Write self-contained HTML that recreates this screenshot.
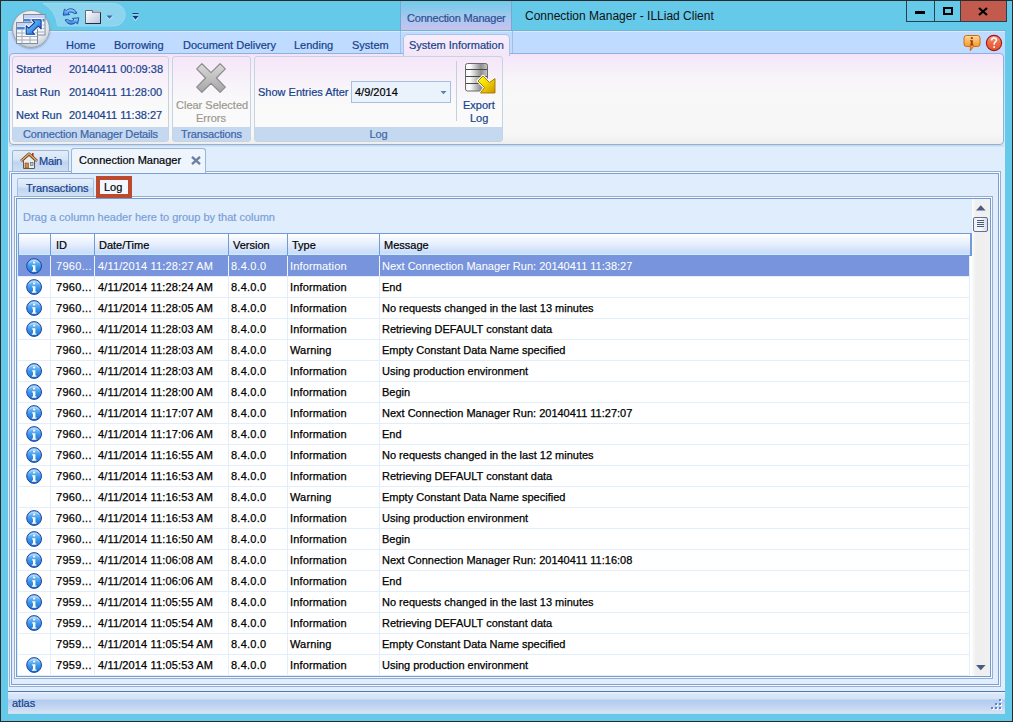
<!DOCTYPE html>
<html><head><meta charset="utf-8">
<style>
*{box-sizing:border-box;margin:0;padding:0}
.stk{-webkit-text-stroke:0.25px currentColor}
html,body{width:1013px;height:722px;overflow:hidden;background:#2b2b2b;font-family:"Liberation Sans",sans-serif;font-size:11px;color:#000;-webkit-text-stroke:0.2px currentColor}
.a{position:absolute}
#win{position:absolute;left:1px;top:1px;width:1011px;height:720px;background:#65c9ea;overflow:hidden}
.t{position:absolute;white-space:nowrap;line-height:13px}
/* title */
#title{left:525px;top:9px;font-size:12px;color:#111;line-height:15px;-webkit-text-stroke:0}
#ctxhdr{left:400px;top:1px;width:112px;height:30px;background:linear-gradient(#6fcbea,#a9c8ee 60%,#c8c3f0);border-left:1px solid #7aa6d6;border-right:1px solid #7aa6d6;border-bottom:1px solid #5a5a8a}
#ctxhdr span{position:absolute;left:6px;top:11px;color:#2c4f92;line-height:13px;letter-spacing:-0.2px}
#wctl{left:906px;top:1px;width:101px;height:21px;border:1px solid #2d3f4a;border-top:none;background:#65c9ea}
#wclose{left:960px;top:1px;width:47px;height:21px;background:#c35a4e;border:1px solid #2d3f4a;border-top:none}
/* ribbon tab row */
#tabrow{left:8px;top:31px;width:997px;height:23px;background:#bfdbff;border-top:1px solid #d9e9fd}
.rt{position:absolute;top:39px;color:#15428b;line-height:13px;white-space:nowrap}
#seltab{left:403px;top:34px;width:107px;height:22px;background:linear-gradient(#f7ecfb,#f3e6f7);border:1px solid #a9c4e4;border-bottom:none;border-radius:5px 5px 0 0}
#ctxl{left:400px;top:31px;width:1px;height:23px;background:#9fbfe6}
#ctxr{left:512px;top:31px;width:1px;height:23px;background:#9fbfe6}
/* ribbon body */
#rbody{left:9px;top:53px;width:995px;height:92px;border:1px solid #8eb2de;border-radius:4px;background:linear-gradient(#f5e3fa 0px,#f6ecfa 10px,#f8f5f9 26px,#f8f8f8 40px,#f7f7f7 80px,#eeeeee 90px)}
.grp{position:absolute;top:56px;height:86px;border:1px solid #c5d3e3;border-radius:3px;background:linear-gradient(#f5e6f8,#f8f4fa 30px,#fafafa 50px)}
.glab{position:absolute;left:0;right:0;bottom:0;height:14px;background:#c4d8f0;color:#3e64a6;text-align:center;line-height:15px;letter-spacing:-0.15px}
.rl{color:#15428b}
#below{left:8px;top:145px;width:997px;height:546px;background:#e0edfd}
/* doc tabs */
#tmain{left:12px;top:150px;width:57px;height:22px;border:1px solid #9cb6d8;border-bottom:none;border-radius:2px 2px 0 0;background:linear-gradient(#e4edf9,#d6e4f6 40%,#bed4f1 55%,#d0e0f5)}
#tcm{left:71px;top:148px;width:135px;height:25px;z-index:1;border:1px solid #9cb6d8;border-bottom:none;border-radius:3px 3px 0 0;background:#eef5fd}
#panel{left:9px;top:171px;width:992px;height:516px;border:1px solid #9aaec8;background:#f6faff}
#panel2{left:11px;top:173px;width:988px;height:512px;border:1px solid #7a9fd8;background:#e0edfd}
/* sub tabs */
#stx{left:17px;top:178px;width:77px;height:19px;border:1px solid #a4bfe4;border-bottom:none;border-radius:2px 2px 0 0;background:linear-gradient(#e6eefa,#d8e6f7 40%,#c0d6f2 55%,#d2e2f6)}
#slog{left:96px;top:176px;width:36px;height:22px;border:4px solid #bc4a2e;background:#f4f8fe;z-index:5}
/* grid */
#gridout{left:14px;top:196px;width:979px;height:483px;border:1px solid #9aaec8;background:#f6faff}
#gridin{left:16px;top:198px;width:975px;height:479px;border:1px solid #6f9bd6;background:#e0edfd}
#drag{left:23px;top:211px;color:#7a9fd6}
#hdr{left:18px;top:233px;width:954px;height:23px;border:1px solid #6f9bd6;background:linear-gradient(#ffffff,#e8f0fd 45%,#c8dcfa 90%,#d8e8fd)}
.hc{position:absolute;top:0;height:21px;border-right:1px solid #6f9bd6}
.ht{position:absolute;top:5px;color:#000;white-space:nowrap;line-height:13px}
#rows{left:18px;top:0px;width:953px;height:677px;}
.row{position:absolute;left:18px;width:951px;height:21px;background:#fff;border-bottom:1px solid #e3eefb}
.row.sel{background:#7894dc;color:#fff;-webkit-text-stroke:0.05px #fff}
.c{position:absolute;top:0;height:20px;line-height:20px;white-space:nowrap;padding-left:4px;border-right:1px solid #e3eefb;overflow:hidden}
.sel .c{border-right-color:#eef3fc}
.c0{left:0;width:33px;padding-left:0}
.c1{left:33px;width:44px;padding-left:5px;letter-spacing:0.3px}
.c2{left:77px;width:134px;padding-left:3px;letter-spacing:0.14px}
.c3{left:211px;width:59px;padding-left:2px;letter-spacing:0.25px}
.c4{left:270px;width:92px;padding-left:2px;letter-spacing:0.15px}
.c5{left:362px;width:589px;border-right:none;padding-left:2px}
.ic{position:absolute;left:8px;top:2px}
#vscroll{left:972px;top:199px;width:18px;height:477px;background:linear-gradient(90deg,#fbfbfb,#efefef 4px,#f0f0f0)}
#status{left:8px;top:691px;width:997px;height:23px;border-top:1px solid #4a76b8;background:linear-gradient(#f2f7fd 0px,#dae7f8 2px,#d3e2f7 7px,#b2cbf0 8px,#c3d6f2 15px,#d6e3f5 21px,#c9d8ea 22px)}
</style></head><body>
<div id="win"></div>
<!-- QAT -->
<svg class="a" style="left:0;top:0" width="140" height="32"><path d="M43 3.5H114A11.25 11.25 0 0 1 114 26H57.5A26.5 26.5 0 0 0 43 3.5Z" fill="#8dd4ee" stroke="#9ad9f0" stroke-width="1"/></svg>
<svg class="a" style="left:62px;top:7px" width="18" height="18" viewBox="0 0 18 18">
 <defs><linearGradient id="rg" x1="0" y1="0" x2="0" y2="1"><stop offset="0" stop-color="#a8d8ff"/><stop offset="1" stop-color="#2f7fe0"/></linearGradient></defs>
 <path d="M14.8 6.2C13.5 3 11 1.6 8.3 1.8C6.6 1.9 5.3 2.6 4.4 3.6L2.4 2.2L1.2 8.2L7.6 7.6L6.1 6.1C6.8 5.3 7.8 4.9 9 5C10.5 5.1 11.6 5.7 12.4 6.6Z" fill="url(#rg)" stroke="#1548a8" stroke-width="0.9" stroke-linejoin="round"/>
 <path d="M3.2 12.8C4.5 16 7 17.4 9.7 17.2C11.4 17.1 12.7 16.4 13.6 15.4L15.6 16.8L16.8 10.8L10.4 11.4L11.9 12.9C11.2 13.7 10.2 14.1 9 14C7.5 13.9 6.4 13.3 5.6 12.4Z" fill="url(#rg)" stroke="#1548a8" stroke-width="0.9" stroke-linejoin="round"/>
</svg>
<svg class="a" style="left:84px;top:9px" width="18" height="16" viewBox="0 0 18 16">
 <defs><linearGradient id="fg" x1="0" y1="0" x2="1" y2="1"><stop offset="0" stop-color="#ffffff"/><stop offset="1" stop-color="#b9c4d8"/></linearGradient></defs>
 <path d="M1.5 1.5H8.5V3.5H16.5V14.5H1.5Z" fill="url(#fg)" stroke="#5a6a86"/>
 <rect x="9" y="1.5" width="7" height="2" fill="#b4b8bc"/>
 <path d="M16.5 3.5V14.5H1.5" stroke="#1e2c48" fill="none"/>
</svg>
<svg class="a" style="left:106px;top:15px" width="7" height="6"><path d="M0.5 0.5h6l-3 3.2z" fill="#3f68a8"/><path d="M0.5 1.5l3 3.2 3-3.2" stroke="#e8f6fc" stroke-width=".8" fill="none" opacity=".7"/></svg>
<svg class="a" style="left:132px;top:12px" width="7" height="10"><path d="M0.5 1h6v1.2h-6zM0.5 4h6l-3 3.6z" fill="#1a3678"/><path d="M0.5 2.6h6M0.5 5l3 3.6 3-3.6" stroke="#f0f8ff" stroke-width=".7" fill="none" opacity=".8"/></svg>

<div id="ctxhdr" class="a"><span>Connection Manager</span></div>
<div id="title" class="t">Connection Manager - ILLiad Client</div>
<div id="wctl" class="a"></div>
<div class="a" style="left:934px;top:1px;width:1px;height:21px;background:#2d3f4a"></div>
<div id="wclose" class="a"></div>
<div class="a" style="left:915px;top:11px;width:10px;height:3px;background:#000"></div>
<div class="a" style="left:943px;top:7px;width:10px;height:8px;border:2px solid #000"></div>
<svg class="a" style="left:978px;top:7px" width="10" height="9"><path d="M1 1l8 7M9 1l-8 7" stroke="#000" stroke-width="2.2"/></svg>

<div id="tabrow" class="a"></div>
<div class="a" style="left:8px;top:30px;width:997px;height:1px;background:#72b4cc"></div>
<div id="ctxl" class="a"></div><div id="ctxr" class="a"></div>
<div class="a" style="left:12px;top:10px;width:38px;height:38px;border-radius:50%;background:radial-gradient(circle at 50% 35%,#ffffff,#e4e8ee 55%,#aeb8c4);border:1px solid #9aa4b0;box-shadow:0 1px 2px rgba(0,0,0,.25)"></div>
<svg class="a" style="left:8px;top:6px" width="46" height="46" viewBox="0 0 46 46">
 <defs><linearGradient id="ab" x1="0" y1="0" x2="1" y2="1"><stop offset="0" stop-color="#9fd4fb"/><stop offset=".5" stop-color="#4a9be8"/><stop offset="1" stop-color="#1662c4"/></linearGradient></defs>
 <rect x="15.5" y="8.5" width="21.5" height="20.5" fill="#f4f6fa" stroke="#7f8c9a"/>
 <rect x="16" y="9" width="20.5" height="3.5" fill="#c9d0f2"/>
 <rect x="16" y="13" width="20.5" height="2.5" fill="#3f86d6"/>
 <path d="M16 19h20.5M16 22.5h20.5M16 26h20.5M22 15.5v13M29 15.5v13" stroke="#a4acb6" stroke-width="1"/>
 <rect x="8.5" y="16.5" width="21" height="21" fill="#f4f6fa" stroke="#7f8c9a"/>
 <rect x="9" y="17" width="20" height="3.5" fill="#c9d0f2"/>
 <rect x="9" y="21" width="20" height="2.5" fill="#3f86d6"/>
 <path d="M9 27h20M9 30.5h20M9 34h20M14 23.5v14M22 23.5v14" stroke="#a4acb6" stroke-width="1"/>
 <path d="M33.1 13.7L33.1 22.9L30.3 20.1L24.3 25.8L26.8 28.3L18.2 28.3L18.2 19.7L20.7 22.2L26.7 16.5L23.9 13.7Z" fill="none" stroke="#fff" stroke-width="3" stroke-linejoin="round"/>
 <path d="M33.1 13.7L33.1 22.9L30.3 20.1L24.3 25.8L26.8 28.3L18.2 28.3L18.2 19.7L20.7 22.2L26.7 16.5L23.9 13.7Z" fill="url(#ab)" stroke="#0d3f9e" stroke-width="1.1" stroke-linejoin="round"/>
</svg>

<div class="rt" style="left:66px">Home</div>
<div class="rt" style="left:114px">Borrowing</div>
<div class="rt" style="left:183px">Document Delivery</div>
<div class="rt" style="left:294px">Lending</div>
<div class="rt" style="left:352px">System</div>
<!-- help icons -->
<svg class="a" style="left:963px;top:34px" width="18" height="19" viewBox="0 0 18 19">
 <defs><linearGradient id="ig" x1="0" y1="0" x2="0" y2="1"><stop offset="0" stop-color="#ffd89a"/><stop offset=".6" stop-color="#f6a43c"/><stop offset="1" stop-color="#ee8a1c"/></linearGradient></defs>
 <path d="M3.5 1.5h11a2.5 2.5 0 0 1 2.5 2.5v6a2.5 2.5 0 0 1-2.5 2.5h-4l-3.2 4.2v-4.2H3.5A2.5 2.5 0 0 1 1 10V4a2.5 2.5 0 0 1 2.5-2.5z" fill="url(#ig)" stroke="#d06a10"/>
 <rect x="7.8" y="3.2" width="2" height="1.8" fill="#a03a10"/><path d="M7 6.2h2.8v4.3h0.8v1.1H7v-1.1h0.8V7.3H7z" fill="#a03a10"/>
</svg>
<svg class="a" style="left:985px;top:34px" width="18" height="18" viewBox="0 0 18 18">
 <defs><linearGradient id="hg" x1="0" y1="0" x2="0" y2="1"><stop offset="0" stop-color="#f7a68a"/><stop offset=".5" stop-color="#ee6a48"/><stop offset="1" stop-color="#e2562e"/></linearGradient></defs>
 <circle cx="9" cy="9" r="7.6" fill="url(#hg)" stroke="#a4140c" stroke-width="1.1"/>
 <path d="M6.6 6.4C6.6 4.9 7.6 4.1 9 4.1C10.5 4.1 11.4 5 11.4 6.2C11.4 7.6 9.4 8 9.2 9.6V10.8" stroke="#fff" stroke-width="1.5" fill="none"/>
 <rect x="8.3" y="12.2" width="1.7" height="1.7" fill="#fff"/>
</svg>

<div class="a" style="left:8px;top:53px;width:997px;height:92px;background:linear-gradient(#bfdbff,#d8e7fb)"></div>
<div id="rbody" class="a"></div>
<div id="seltab" class="a"></div>
<div class="rt" style="left:409px">System Information</div>
<div class="grp" style="left:12px;width:157px"><div class="glab">Connection Manager Details</div></div>
<div class="grp" style="left:172px;width:79px"><div class="glab">Transactions</div></div>
<div class="grp" style="left:254px;width:249px"><div class="glab">Log</div></div>
<div class="t rl" style="left:16px;top:63px">Started</div>
<div class="t rl" style="left:69px;top:63px">20140411 00:09:38</div>
<div class="t rl" style="left:16px;top:86px">Last Run</div>
<div class="t rl" style="left:69px;top:86px">20140411 11:28:00</div>
<div class="t rl" style="left:16px;top:109px">Next Run</div>
<div class="t rl" style="left:69px;top:109px">20140411 11:38:27</div>
<svg class="a" style="left:194px;top:61px" width="34" height="34" viewBox="0 0 34 34">
 <defs><linearGradient id="xg" x1="0" y1="0" x2="0" y2="1"><stop offset="0" stop-color="#dadada"/><stop offset="1" stop-color="#a6a6a6"/></linearGradient></defs>
 <path d="M2.7 7.9L7.9 2.7L17 11.6L26.1 2.7L31.3 7.9L22.4 17L31.3 26.1L26.1 31.3L17 22.4L7.9 31.3L2.7 26.1L11.6 17Z" fill="url(#xg)" stroke="#8c8c8c" stroke-width="1.2" stroke-linejoin="round"/>
</svg>
<div class="t" style="left:176px;top:99px;color:#9c9890">Clear Selected</div>
<div class="t" style="left:196px;top:112px;color:#9c9890">Errors</div>
<div class="t rl" style="left:258px;top:86px">Show Entries After</div>
<div class="a" style="left:351px;top:81px;width:100px;height:22px;border:1px solid #a7bfdf;background:#eaf2fb"></div>
<div class="t" style="left:355px;top:86px;color:#000">4/9/2014</div>
<svg class="a" style="left:440px;top:91px" width="7" height="4"><path d="M0.5 0h6l-3 3.2z" fill="#5a7db5"/></svg>
<div class="a" style="left:456px;top:61px;width:1px;height:60px;background:#c3d0e0"></div>
<svg class="a" style="left:458px;top:56px" width="44" height="44" viewBox="0 0 44 44">
 <defs><linearGradient id="dg" x1="0" y1="0" x2="1" y2="0"><stop offset="0" stop-color="#f4f4f4"/><stop offset=".2" stop-color="#ffffff"/><stop offset=".7" stop-color="#8e8e8e"/><stop offset="1" stop-color="#c8c8c8"/></linearGradient>
 <linearGradient id="ag" x1="0" y1="0" x2="1" y2="1"><stop offset="0" stop-color="#ffff20"/><stop offset=".45" stop-color="#f2d800"/><stop offset="1" stop-color="#c89200"/></linearGradient></defs>
 <rect x="7.5" y="7.5" width="22" height="27.5" rx="2" fill="url(#dg)" stroke="#6a6a6a"/>
 <path d="M8 13.5h21M8 20.5h21M8 27.5h21" stroke="#4a4a4a" stroke-width="1.2"/>
 <path d="M37 37L37 22.5L31.5 26.5L25 20L20 25L26.5 31.5L22.5 37Z" fill="none" stroke="#fff" stroke-width="2.5" stroke-linejoin="round"/>
 <path d="M37 37L37 22.5L31.5 26.5L25 20L20 25L26.5 31.5L22.5 37Z" fill="url(#ag)" stroke="#a87a00" stroke-width="1" stroke-linejoin="round"/>
</svg>
<div class="t rl" style="left:463px;top:99px">Export</div>
<div class="t rl" style="left:470px;top:112px">Log</div>

<div id="below" class="a"></div>
<div class="a" style="left:9px;top:145px;width:995px;height:2px;background:linear-gradient(#c9d3df,#d9e8fb)"></div>
<div id="tmain" class="a"></div>
<svg class="a" style="left:20px;top:152px" width="18" height="18" viewBox="0 0 18 18">
 <rect x="12" y="1" width="1.6" height="4" fill="#c8281c"/>
 <path d="M3.5 8.5V16.5H14.5V8.5L9 3.5Z" fill="#ececec" stroke="#5a5a5a"/>
 <path d="M1 9L9 1.8L17 9" stroke="#6a4420" stroke-width="2.6" fill="none" stroke-linejoin="round"/>
 <path d="M1 9L9 1.8L17 9" stroke="#e2a964" stroke-width="1.4" fill="none" stroke-linejoin="round"/>
 <rect x="5" y="11" width="3.4" height="5" fill="#d88a3a" stroke="#7a4a1a" stroke-width=".6"/>
 <rect x="10.4" y="10.5" width="2.6" height="2.8" fill="#9fd0f8" stroke="#5a5a5a" stroke-width=".6"/>
</svg>
<div class="t" style="left:39px;top:155px;color:#15428b;letter-spacing:-0.2px">Main</div>

<div id="panel" class="a"></div>
<div id="panel2" class="a"></div>
<div id="tcm" class="a"></div>
<div class="t" style="left:79px;top:154px;z-index:2">Connection Manager</div>
<svg class="a" style="left:191px;top:156px;z-index:2" width="10" height="9"><path d="M1 0.8l8 7.4M9 0.8l-8 7.4" stroke="#6f7fa2" stroke-width="2.3"/></svg>
<div id="stx" class="a"></div>
<div class="t" style="left:26px;top:182px;color:#15428b">Transactions</div>
<div id="slog" class="a"></div>
<div class="t" style="left:104px;top:181px;z-index:6">Log</div>

<div id="gridout" class="a"></div>
<div id="gridin" class="a"></div>
<div id="drag" class="t">Drag a column header here to group by that column</div>
<div id="hdr" class="a">
 <div class="hc" style="left:0;width:32px"></div>
 <div class="hc" style="left:32px;width:44px"></div>
 <div class="hc" style="left:76px;width:134px"></div>
 <div class="hc" style="left:210px;width:59px"></div>
 <div class="hc" style="left:269px;width:92px"></div>
 <div class="hc" style="left:361px;width:591px"></div>
 <div class="ht" style="left:37px">ID</div>
 <div class="ht" style="left:80px">Date/Time</div>
 <div class="ht" style="left:214px">Version</div>
 <div class="ht" style="left:273px">Type</div>
 <div class="ht" style="left:365px">Message</div>
</div>
<div class="a" style="left:18px;top:256px;width:954px;height:420px;background:#fff"></div>
<svg width="0" height="0" style="position:absolute"><defs><linearGradient id="gI" x1="0" y1="0" x2="0" y2="1"><stop offset="0" stop-color="#9ad2f8"/><stop offset=".55" stop-color="#3a96ea"/><stop offset="1" stop-color="#1670d4"/></linearGradient></defs></svg><div class="row sel stk" style="top:256px"><div class="c c0"><svg class="ic" width="17" height="17" viewBox="0 0 17 17"><circle cx="8.1" cy="8" r="7.4" fill="url(#gI)" stroke="#23449e" stroke-width="1"/><path d="M3.4 4.6A6.2 6.2 0 0 1 12.8 4.6" stroke="#e8f4ff" stroke-opacity=".55" stroke-width="1" fill="none"/><rect x="7.1" y="3.6" width="2.1" height="1.8" fill="#fff"/><path d="M6.1 7.3h3.3v5.2h1v1.3H5.9v-1.3h1.1V8.6H6.1z" fill="#fff"/></svg></div><div class="c c1">7960...</div><div class="c c2">4/11/2014 11:28:27 AM</div><div class="c c3">8.4.0.0</div><div class="c c4">Information</div><div class="c c5">Next Connection Manager Run: 20140411 11:38:27</div></div>
<div class="row stk" style="top:277px"><div class="c c0"><svg class="ic" width="17" height="17" viewBox="0 0 17 17"><circle cx="8.1" cy="8" r="7.4" fill="url(#gI)" stroke="#23449e" stroke-width="1"/><path d="M3.4 4.6A6.2 6.2 0 0 1 12.8 4.6" stroke="#e8f4ff" stroke-opacity=".55" stroke-width="1" fill="none"/><rect x="7.1" y="3.6" width="2.1" height="1.8" fill="#fff"/><path d="M6.1 7.3h3.3v5.2h1v1.3H5.9v-1.3h1.1V8.6H6.1z" fill="#fff"/></svg></div><div class="c c1">7960...</div><div class="c c2">4/11/2014 11:28:24 AM</div><div class="c c3">8.4.0.0</div><div class="c c4">Information</div><div class="c c5">End</div></div>
<div class="row stk" style="top:298px"><div class="c c0"><svg class="ic" width="17" height="17" viewBox="0 0 17 17"><circle cx="8.1" cy="8" r="7.4" fill="url(#gI)" stroke="#23449e" stroke-width="1"/><path d="M3.4 4.6A6.2 6.2 0 0 1 12.8 4.6" stroke="#e8f4ff" stroke-opacity=".55" stroke-width="1" fill="none"/><rect x="7.1" y="3.6" width="2.1" height="1.8" fill="#fff"/><path d="M6.1 7.3h3.3v5.2h1v1.3H5.9v-1.3h1.1V8.6H6.1z" fill="#fff"/></svg></div><div class="c c1">7960...</div><div class="c c2">4/11/2014 11:28:05 AM</div><div class="c c3">8.4.0.0</div><div class="c c4">Information</div><div class="c c5">No requests changed in the last 13 minutes</div></div>
<div class="row stk" style="top:319px"><div class="c c0"><svg class="ic" width="17" height="17" viewBox="0 0 17 17"><circle cx="8.1" cy="8" r="7.4" fill="url(#gI)" stroke="#23449e" stroke-width="1"/><path d="M3.4 4.6A6.2 6.2 0 0 1 12.8 4.6" stroke="#e8f4ff" stroke-opacity=".55" stroke-width="1" fill="none"/><rect x="7.1" y="3.6" width="2.1" height="1.8" fill="#fff"/><path d="M6.1 7.3h3.3v5.2h1v1.3H5.9v-1.3h1.1V8.6H6.1z" fill="#fff"/></svg></div><div class="c c1">7960...</div><div class="c c2">4/11/2014 11:28:03 AM</div><div class="c c3">8.4.0.0</div><div class="c c4">Information</div><div class="c c5">Retrieving DEFAULT constant data</div></div>
<div class="row stk" style="top:340px"><div class="c c0"></div><div class="c c1">7960...</div><div class="c c2">4/11/2014 11:28:03 AM</div><div class="c c3">8.4.0.0</div><div class="c c4">Warning</div><div class="c c5">Empty Constant Data Name specified</div></div>
<div class="row stk" style="top:361px"><div class="c c0"><svg class="ic" width="17" height="17" viewBox="0 0 17 17"><circle cx="8.1" cy="8" r="7.4" fill="url(#gI)" stroke="#23449e" stroke-width="1"/><path d="M3.4 4.6A6.2 6.2 0 0 1 12.8 4.6" stroke="#e8f4ff" stroke-opacity=".55" stroke-width="1" fill="none"/><rect x="7.1" y="3.6" width="2.1" height="1.8" fill="#fff"/><path d="M6.1 7.3h3.3v5.2h1v1.3H5.9v-1.3h1.1V8.6H6.1z" fill="#fff"/></svg></div><div class="c c1">7960...</div><div class="c c2">4/11/2014 11:28:03 AM</div><div class="c c3">8.4.0.0</div><div class="c c4">Information</div><div class="c c5">Using production environment</div></div>
<div class="row stk" style="top:382px"><div class="c c0"><svg class="ic" width="17" height="17" viewBox="0 0 17 17"><circle cx="8.1" cy="8" r="7.4" fill="url(#gI)" stroke="#23449e" stroke-width="1"/><path d="M3.4 4.6A6.2 6.2 0 0 1 12.8 4.6" stroke="#e8f4ff" stroke-opacity=".55" stroke-width="1" fill="none"/><rect x="7.1" y="3.6" width="2.1" height="1.8" fill="#fff"/><path d="M6.1 7.3h3.3v5.2h1v1.3H5.9v-1.3h1.1V8.6H6.1z" fill="#fff"/></svg></div><div class="c c1">7960...</div><div class="c c2">4/11/2014 11:28:00 AM</div><div class="c c3">8.4.0.0</div><div class="c c4">Information</div><div class="c c5">Begin</div></div>
<div class="row stk" style="top:403px"><div class="c c0"><svg class="ic" width="17" height="17" viewBox="0 0 17 17"><circle cx="8.1" cy="8" r="7.4" fill="url(#gI)" stroke="#23449e" stroke-width="1"/><path d="M3.4 4.6A6.2 6.2 0 0 1 12.8 4.6" stroke="#e8f4ff" stroke-opacity=".55" stroke-width="1" fill="none"/><rect x="7.1" y="3.6" width="2.1" height="1.8" fill="#fff"/><path d="M6.1 7.3h3.3v5.2h1v1.3H5.9v-1.3h1.1V8.6H6.1z" fill="#fff"/></svg></div><div class="c c1">7960...</div><div class="c c2">4/11/2014 11:17:07 AM</div><div class="c c3">8.4.0.0</div><div class="c c4">Information</div><div class="c c5">Next Connection Manager Run: 20140411 11:27:07</div></div>
<div class="row stk" style="top:424px"><div class="c c0"><svg class="ic" width="17" height="17" viewBox="0 0 17 17"><circle cx="8.1" cy="8" r="7.4" fill="url(#gI)" stroke="#23449e" stroke-width="1"/><path d="M3.4 4.6A6.2 6.2 0 0 1 12.8 4.6" stroke="#e8f4ff" stroke-opacity=".55" stroke-width="1" fill="none"/><rect x="7.1" y="3.6" width="2.1" height="1.8" fill="#fff"/><path d="M6.1 7.3h3.3v5.2h1v1.3H5.9v-1.3h1.1V8.6H6.1z" fill="#fff"/></svg></div><div class="c c1">7960...</div><div class="c c2">4/11/2014 11:17:06 AM</div><div class="c c3">8.4.0.0</div><div class="c c4">Information</div><div class="c c5">End</div></div>
<div class="row stk" style="top:445px"><div class="c c0"><svg class="ic" width="17" height="17" viewBox="0 0 17 17"><circle cx="8.1" cy="8" r="7.4" fill="url(#gI)" stroke="#23449e" stroke-width="1"/><path d="M3.4 4.6A6.2 6.2 0 0 1 12.8 4.6" stroke="#e8f4ff" stroke-opacity=".55" stroke-width="1" fill="none"/><rect x="7.1" y="3.6" width="2.1" height="1.8" fill="#fff"/><path d="M6.1 7.3h3.3v5.2h1v1.3H5.9v-1.3h1.1V8.6H6.1z" fill="#fff"/></svg></div><div class="c c1">7960...</div><div class="c c2">4/11/2014 11:16:55 AM</div><div class="c c3">8.4.0.0</div><div class="c c4">Information</div><div class="c c5">No requests changed in the last 12 minutes</div></div>
<div class="row stk" style="top:466px"><div class="c c0"><svg class="ic" width="17" height="17" viewBox="0 0 17 17"><circle cx="8.1" cy="8" r="7.4" fill="url(#gI)" stroke="#23449e" stroke-width="1"/><path d="M3.4 4.6A6.2 6.2 0 0 1 12.8 4.6" stroke="#e8f4ff" stroke-opacity=".55" stroke-width="1" fill="none"/><rect x="7.1" y="3.6" width="2.1" height="1.8" fill="#fff"/><path d="M6.1 7.3h3.3v5.2h1v1.3H5.9v-1.3h1.1V8.6H6.1z" fill="#fff"/></svg></div><div class="c c1">7960...</div><div class="c c2">4/11/2014 11:16:53 AM</div><div class="c c3">8.4.0.0</div><div class="c c4">Information</div><div class="c c5">Retrieving DEFAULT constant data</div></div>
<div class="row stk" style="top:487px"><div class="c c0"></div><div class="c c1">7960...</div><div class="c c2">4/11/2014 11:16:53 AM</div><div class="c c3">8.4.0.0</div><div class="c c4">Warning</div><div class="c c5">Empty Constant Data Name specified</div></div>
<div class="row stk" style="top:508px"><div class="c c0"><svg class="ic" width="17" height="17" viewBox="0 0 17 17"><circle cx="8.1" cy="8" r="7.4" fill="url(#gI)" stroke="#23449e" stroke-width="1"/><path d="M3.4 4.6A6.2 6.2 0 0 1 12.8 4.6" stroke="#e8f4ff" stroke-opacity=".55" stroke-width="1" fill="none"/><rect x="7.1" y="3.6" width="2.1" height="1.8" fill="#fff"/><path d="M6.1 7.3h3.3v5.2h1v1.3H5.9v-1.3h1.1V8.6H6.1z" fill="#fff"/></svg></div><div class="c c1">7960...</div><div class="c c2">4/11/2014 11:16:53 AM</div><div class="c c3">8.4.0.0</div><div class="c c4">Information</div><div class="c c5">Using production environment</div></div>
<div class="row stk" style="top:529px"><div class="c c0"><svg class="ic" width="17" height="17" viewBox="0 0 17 17"><circle cx="8.1" cy="8" r="7.4" fill="url(#gI)" stroke="#23449e" stroke-width="1"/><path d="M3.4 4.6A6.2 6.2 0 0 1 12.8 4.6" stroke="#e8f4ff" stroke-opacity=".55" stroke-width="1" fill="none"/><rect x="7.1" y="3.6" width="2.1" height="1.8" fill="#fff"/><path d="M6.1 7.3h3.3v5.2h1v1.3H5.9v-1.3h1.1V8.6H6.1z" fill="#fff"/></svg></div><div class="c c1">7960...</div><div class="c c2">4/11/2014 11:16:50 AM</div><div class="c c3">8.4.0.0</div><div class="c c4">Information</div><div class="c c5">Begin</div></div>
<div class="row stk" style="top:550px"><div class="c c0"><svg class="ic" width="17" height="17" viewBox="0 0 17 17"><circle cx="8.1" cy="8" r="7.4" fill="url(#gI)" stroke="#23449e" stroke-width="1"/><path d="M3.4 4.6A6.2 6.2 0 0 1 12.8 4.6" stroke="#e8f4ff" stroke-opacity=".55" stroke-width="1" fill="none"/><rect x="7.1" y="3.6" width="2.1" height="1.8" fill="#fff"/><path d="M6.1 7.3h3.3v5.2h1v1.3H5.9v-1.3h1.1V8.6H6.1z" fill="#fff"/></svg></div><div class="c c1">7959...</div><div class="c c2">4/11/2014 11:06:08 AM</div><div class="c c3">8.4.0.0</div><div class="c c4">Information</div><div class="c c5">Next Connection Manager Run: 20140411 11:16:08</div></div>
<div class="row stk" style="top:571px"><div class="c c0"><svg class="ic" width="17" height="17" viewBox="0 0 17 17"><circle cx="8.1" cy="8" r="7.4" fill="url(#gI)" stroke="#23449e" stroke-width="1"/><path d="M3.4 4.6A6.2 6.2 0 0 1 12.8 4.6" stroke="#e8f4ff" stroke-opacity=".55" stroke-width="1" fill="none"/><rect x="7.1" y="3.6" width="2.1" height="1.8" fill="#fff"/><path d="M6.1 7.3h3.3v5.2h1v1.3H5.9v-1.3h1.1V8.6H6.1z" fill="#fff"/></svg></div><div class="c c1">7959...</div><div class="c c2">4/11/2014 11:06:06 AM</div><div class="c c3">8.4.0.0</div><div class="c c4">Information</div><div class="c c5">End</div></div>
<div class="row stk" style="top:592px"><div class="c c0"><svg class="ic" width="17" height="17" viewBox="0 0 17 17"><circle cx="8.1" cy="8" r="7.4" fill="url(#gI)" stroke="#23449e" stroke-width="1"/><path d="M3.4 4.6A6.2 6.2 0 0 1 12.8 4.6" stroke="#e8f4ff" stroke-opacity=".55" stroke-width="1" fill="none"/><rect x="7.1" y="3.6" width="2.1" height="1.8" fill="#fff"/><path d="M6.1 7.3h3.3v5.2h1v1.3H5.9v-1.3h1.1V8.6H6.1z" fill="#fff"/></svg></div><div class="c c1">7959...</div><div class="c c2">4/11/2014 11:05:55 AM</div><div class="c c3">8.4.0.0</div><div class="c c4">Information</div><div class="c c5">No requests changed in the last 13 minutes</div></div>
<div class="row stk" style="top:613px"><div class="c c0"><svg class="ic" width="17" height="17" viewBox="0 0 17 17"><circle cx="8.1" cy="8" r="7.4" fill="url(#gI)" stroke="#23449e" stroke-width="1"/><path d="M3.4 4.6A6.2 6.2 0 0 1 12.8 4.6" stroke="#e8f4ff" stroke-opacity=".55" stroke-width="1" fill="none"/><rect x="7.1" y="3.6" width="2.1" height="1.8" fill="#fff"/><path d="M6.1 7.3h3.3v5.2h1v1.3H5.9v-1.3h1.1V8.6H6.1z" fill="#fff"/></svg></div><div class="c c1">7959...</div><div class="c c2">4/11/2014 11:05:54 AM</div><div class="c c3">8.4.0.0</div><div class="c c4">Information</div><div class="c c5">Retrieving DEFAULT constant data</div></div>
<div class="row stk" style="top:634px"><div class="c c0"></div><div class="c c1">7959...</div><div class="c c2">4/11/2014 11:05:54 AM</div><div class="c c3">8.4.0.0</div><div class="c c4">Warning</div><div class="c c5">Empty Constant Data Name specified</div></div>
<div class="row stk" style="top:655px"><div class="c c0"><svg class="ic" width="17" height="17" viewBox="0 0 17 17"><circle cx="8.1" cy="8" r="7.4" fill="url(#gI)" stroke="#23449e" stroke-width="1"/><path d="M3.4 4.6A6.2 6.2 0 0 1 12.8 4.6" stroke="#e8f4ff" stroke-opacity=".55" stroke-width="1" fill="none"/><rect x="7.1" y="3.6" width="2.1" height="1.8" fill="#fff"/><path d="M6.1 7.3h3.3v5.2h1v1.3H5.9v-1.3h1.1V8.6H6.1z" fill="#fff"/></svg></div><div class="c c1">7959...</div><div class="c c2">4/11/2014 11:05:53 AM</div><div class="c c3">8.4.0.0</div><div class="c c4">Information</div><div class="c c5">Using production environment</div></div>
<div class="a" style="left:969px;top:256px;width:1px;height:420px;background:#e3eefb"></div>
<div id="vscroll" class="a"></div>
<svg class="a" style="left:976px;top:205px" width="10" height="6"><path d="M0 5.5L4.8 0.2 9.6 5.5z" fill="#4a5a82"/></svg>
<div class="a" style="left:973px;top:217px;width:15px;height:15px;border:1px solid #5f6f9c;border-radius:2px;background:linear-gradient(90deg,#eef0f4,#fafbfc 50%,#d6dce6)"></div>
<div class="a" style="left:977px;top:220px;width:7px;height:7px;background:repeating-linear-gradient(#47577f 0 1px,transparent 1px 2px)"></div>
<svg class="a" style="left:976px;top:665px" width="10" height="6"><path d="M0 0h9.6L4.8 5.3z" fill="#4a5a82"/></svg>

<div id="status" class="a"></div>
<div class="t" style="left:12px;top:697px;color:#15428b">atlas</div>
<svg class="a" style="left:989px;top:698px" width="14" height="14"><rect x="11" y="2" width="2" height="2" fill="#ffffff"/><rect x="7" y="6" width="2" height="2" fill="#ffffff"/><rect x="11" y="6" width="2" height="2" fill="#ffffff"/><rect x="3" y="10" width="2" height="2" fill="#ffffff"/><rect x="7" y="10" width="2" height="2" fill="#ffffff"/><rect x="11" y="10" width="2" height="2" fill="#ffffff"/><rect x="10" y="1" width="2" height="2" fill="#5f86c4"/><rect x="6" y="5" width="2" height="2" fill="#5f86c4"/><rect x="10" y="5" width="2" height="2" fill="#5f86c4"/><rect x="2" y="9" width="2" height="2" fill="#5f86c4"/><rect x="6" y="9" width="2" height="2" fill="#5f86c4"/><rect x="10" y="9" width="2" height="2" fill="#5f86c4"/></svg>
</body></html>
